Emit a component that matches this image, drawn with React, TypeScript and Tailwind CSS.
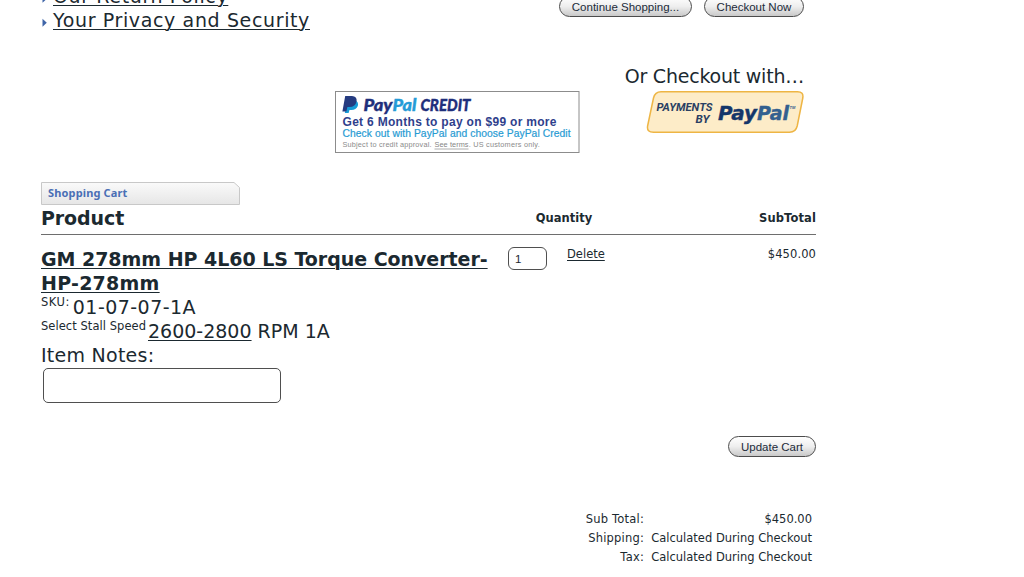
import React, { useState } from 'react';

interface PillButtonProps {
  label: string;
  className: string;
}

interface TotalRow {
  label: string;
  value: string;
}

const totals: TotalRow[] = [
  { label: 'Sub Total:', value: '$450.00' },
  { label: 'Shipping:', value: 'Calculated During Checkout' },
  { label: 'Tax:', value: 'Calculated During Checkout' },
];

const PillButton: React.FC<PillButtonProps> = ({ label, className }) => (
  <button
    className={`h-[21px] rounded-full border border-[#4c4c4c] bg-linear-to-b from-white via-[#eeeeee] to-[#c9c9c9] font-['Liberation_Sans',sans-serif] text-[11.5px] leading-[18px] whitespace-nowrap text-[#1c2b3a] ${className}`}
  >
    {label}
  </button>
);

const Arrow: React.FC = () => (
  <svg width="12" height="24" viewBox="0 0 12 24" className="shrink-0">
    <path d="M1.5 10.8 L5.8 14.8 L1.5 18.8 Z" fill="#3f65a8" />
  </svg>
);

const PayPalCredit: React.FC = () => (
  <svg width="245" height="62" viewBox="0 0 245 62" fontFamily="'Liberation Sans', sans-serif">
    <rect x="0.5" y="0.5" width="243.5" height="61" fill="#fff" stroke="#8c8c8c" />
    {/* double P mark */}
    <path d="M13 9 H20 Q24 11 22.8 15 Q21 19 16.5 19 H14.5 L13.6 22 H9.8 Z" fill="#179bd7" />
    <path d="M10.2 5 H17 Q22.2 5.3 21.6 10 Q20.6 16 14.3 16 H12.4 L11.4 20.6 H7.4 Z" fill="#253b80" />
    <g fontFamily="Lato, sans-serif" fontStyle="italic" fontWeight="900" fontSize="16.5" strokeWidth="0.35">
      <text x="28.5" y="20" textLength="29" lengthAdjust="spacingAndGlyphs" fill="#1f2f7c" stroke="#1f2f7c">Pay</text>
      <text x="57.5" y="20" textLength="24" lengthAdjust="spacingAndGlyphs" fill="#259bd7" stroke="#259bd7">Pal</text>
      <text x="85.5" y="20" textLength="50" lengthAdjust="spacingAndGlyphs" fill="#1f2f7c" stroke="#1f2f7c">CREDIT</text>
    </g>
    <text x="7.5" y="35.2" fontSize="12" fontWeight="700" fill="#2f3f8c" textLength="214">Get 6 Months to pay on $99 or more</text>
    <text x="7.5" y="46" fontSize="10.3" fill="#279bd3" stroke="#279bd3" strokeWidth="0.2" textLength="228">Check out with PayPal and choose PayPal Credit</text>
    <text x="7.5" y="56.3" fontSize="7.3" fill="#8b8b8b" textLength="89">Subject to credit approval.</text>
    <text x="99.5" y="56.3" fontSize="7.3" fill="#858585" textLength="34">See terms</text>
    <path d="M99.5 58 H133.5" stroke="#999" strokeWidth="0.8" />
    <text x="133.7" y="56.3" fontSize="7.3" fill="#8b8b8b" textLength="71">. US customers only.</text>
  </svg>
);

const PaymentsByPayPal: React.FC = () => (
  <svg width="158" height="42" viewBox="0 0 158 42">
    <path
      d="M15 0.8 H151.5 Q157.8 0.8 156.8 7 L151.2 35 Q149.8 41.2 143.5 41.2 H7.5 Q0.6 41.2 1.6 35 L7.5 7 Q9 0.8 15 0.8 Z"
      fill="#fdecc8"
      stroke="#eeb544"
      strokeWidth="1.5"
    />
    <g fontStyle="italic" fontWeight="700">
      <g fontFamily="Roboto, sans-serif" fontSize="11.5" fill="#2a3f63">
        <text x="10.5" y="19.5" textLength="56" lengthAdjust="spacingAndGlyphs">PAYMENTS</text>
        <text x="49.5" y="32" textLength="14" lengthAdjust="spacingAndGlyphs">BY</text>
      </g>
      <g fontFamily="'DejaVu Sans', Verdana, sans-serif" fontSize="20" strokeWidth="0.4">
        <text x="72" y="28.5" textLength="39" lengthAdjust="spacingAndGlyphs" fill="#14366a" stroke="#14366a">Pay</text>
        <text x="111" y="28.5" textLength="32" lengthAdjust="spacingAndGlyphs" fill="#33608f" stroke="#33608f">Pal</text>
      </g>
      <text x="143.5" y="17.5" fontSize="4" fill="#33608f" fontFamily="'Liberation Sans', sans-serif">TM</text>
    </g>
  </svg>
);

const CartTab: React.FC = () => (
  <div className="relative h-[23px] w-[199px]">
    <svg width="199" height="23" viewBox="0 0 199 23" className="block">
      <defs>
        <linearGradient id="tab" x1="0" y1="0" x2="0" y2="1">
          <stop offset="0" stopColor="#fafafa" />
          <stop offset="1" stopColor="#e6e6e6" />
        </linearGradient>
      </defs>
      <path d="M0.5 0.5 H193 L198.5 5.5 V22.5 H0.5 Z" fill="url(#tab)" stroke="#c8c8c8" />
    </svg>
    <span className="absolute top-0 left-[7px] font-['Noto_Sans',sans-serif] text-[11px] leading-[22px] font-bold tracking-[0.15px] text-[#4a6fb5]">
      Shopping Cart
    </span>
  </div>
);

const App: React.FC = () => {
  const [quantity, setQuantity] = useState('1');
  const [notes, setNotes] = useState('');

  return (
    <div className="h-[577px] w-full overflow-hidden bg-white font-['DejaVu_Sans',Verdana,sans-serif] text-[19px] leading-6 text-[#1b2930]">
      <div className="ml-[41px] w-[775px]">
        {/* policy links and top buttons */}
        <div className="flex h-8 items-end justify-between pr-3">
          <ul className="tracking-[0.63px]">
            <li className="flex">
              <Arrow />
              <a href="#" className="underline decoration-1 underline-offset-2">Our Return Policy</a>
            </li>
            <li className="flex">
              <Arrow />
              <a href="#" className="underline decoration-1 underline-offset-2">Your Privacy and Security</a>
            </li>
          </ul>
          <div className="mb-[15px] flex gap-3">
            <PillButton label="Continue Shopping..." className="w-[133px]" />
            <PillButton label="Checkout Now" className="w-[100px]" />
          </div>
        </div>

        {/* paypal checkout */}
        <div className="mt-8 pr-3 text-right tracking-[-0.22px]">Or Checkout with…</div>
        <div className="mt-[3px] flex h-[62px] items-start justify-between pr-3 pl-[294px]">
          <PayPalCredit />
          <PaymentsByPayPal />
        </div>

        <div className="mt-[29px]">
          <CartTab />
        </div>

        {/* cart table */}
        <div className="flex h-[30px] border-b border-[#6e6e6e] font-bold">
          <div className="w-[467px] pt-px tracking-[-0.1px]">Product</div>
          <div className="w-[112px] pt-px text-center text-[11.5px]">Quantity</div>
          <div className="flex-1 pt-px text-right text-[11.5px] tracking-[0.1px]">SubTotal</div>
        </div>
        <div className="flex h-[169px] pt-3">
          <div className="w-[467px]">
            <a href="#" className="block font-bold tracking-[-0.04px] whitespace-nowrap underline decoration-1 underline-offset-2">
              GM 278mm HP 4L60 LS Torque Converter-
              <br />
              <span className="tracking-[0.25px]">HP-278mm</span>
            </a>
            <div className="flex gap-[3px]">
              <span className="text-[11.5px] leading-[14px] tracking-[0.5px]">SKU:</span>
              <span className="tracking-[0.45px]">01-07-07-1A</span>
            </div>
            <div className="flex gap-[2px] whitespace-nowrap">
              <span className="text-[11.5px] leading-[14px] tracking-[0.05px]">Select Stall Speed</span>
              <span>
                <a href="#" className="underline decoration-1 underline-offset-2">2600-2800</a> RPM 1A
              </span>
            </div>
            <div className="tracking-[0.25px]">Item Notes:</div>
            <input
              value={notes}
              onChange={(e) => setNotes(e.target.value)}
              className="mt-px ml-[2px] block h-[35px] w-[238px] rounded-[5px] border border-[#4f4f4f] px-2 text-sm"
            />
          </div>
          <input
            value={quantity}
            onChange={(e) => setQuantity(e.target.value)}
            className="block h-[23px] w-[39px] rounded-[6px] border border-[#4f4f4f] px-[6px] font-['Liberation_Sans',sans-serif] text-[11.5px]"
          />
          <a href="#" className="ml-5 h-4 text-[11.5px] leading-[14px] underline decoration-1 underline-offset-2">Delete</a>
          <div className="flex-1 text-right text-[11.5px] leading-[14px] tracking-[0.1px]">$450.00</div>
        </div>

        <div className="mt-8 flex justify-end">
          <PillButton label="Update Cart" className="w-[88px]" />
        </div>

        {/* order totals */}
        <div className="mt-[53px] pr-1 text-[11.5px] leading-[19px]">
          {totals.map((row) => (
            <div key={row.label} className="flex justify-end">
              <span className="tracking-[0.2px]">{row.label}</span>
              <span className="ml-[7px] w-[161px] text-right whitespace-nowrap">{row.value}</span>
            </div>
          ))}
        </div>
      </div>
    </div>
  );
};

export default App;
